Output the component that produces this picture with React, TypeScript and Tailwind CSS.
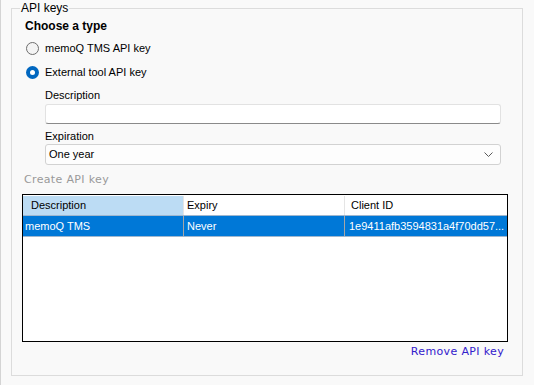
import React from 'react';

const ui = { fontFamily: '"Liberation Sans", Arial, sans-serif' };
const linkFont = { fontFamily: '"DejaVu Sans", Verdana, sans-serif' };

interface ApiKeyRow {
  description: string;
  expiry: string;
  clientId: string;
}

const rows: ApiKeyRow[] = [
  {
    description: 'memoQ TMS',
    expiry: 'Never',
    clientId: '1e9411afb3594831a4f70dd57...',
  },
];

function Radio({ checked }: { checked?: boolean }) {
  if (checked) {
    return (
      <span className="flex h-[13px] w-[13px] items-center justify-center rounded-full bg-[#0067c0]">
        <span className="h-[5px] w-[5px] rounded-full bg-white" />
      </span>
    );
  }
  return (
    <span className="h-[13px] w-[13px] rounded-full border border-[#6e6e6e] bg-[#f4f4f4]" />
  );
}

export default function App() {
  return (
    <div
      className="h-[385px] w-[534px] overflow-hidden border-l border-[#d4d4d4] bg-[#f9f9f9] text-[11px] text-black"
      style={ui}
    >
      <div className="relative ml-[10px] mt-[8px] h-[368px] w-[512px] border border-[#dcdcdc]">
        <span className="absolute left-[8px] top-[-8px] bg-[#f9f9f9] px-px text-[12px] leading-[14px]">
          API keys
        </span>

        <div className="h-[15px] mt-[10px] pl-[13px] text-[12px] font-bold leading-[15px]">
          Choose a type
        </div>

        <div className="mt-[2px] flex h-[24px] items-center gap-[6px] pl-[14px]">
          <Radio />
          <span>memoQ TMS API key</span>
        </div>
        <div className="flex h-[24px] items-center gap-[6px] pl-[14px]">
          <Radio checked />
          <span>External tool API key</span>
        </div>

        <div className="pl-[33px]">
          <div className="mt-[4px] h-[14px] leading-[14px]">Description</div>
          <div className="mt-[2px] h-[20px] w-[456px] rounded-[3px] border border-[#e2e2e2] border-b-[#8a8a8a] bg-white" />

          <div className="mt-[5px] h-[14px] leading-[14px]">Expiration</div>
          <div className="mt-px flex h-[21px] w-[456px] items-center justify-between rounded-[3px] border border-[#d2d2d2] bg-[#fdfdfd] pl-[3px] pr-[7px]">
            <span>One year</span>
            <svg width="9" height="5" viewBox="0 0 9 5" fill="none">
              <polyline points="0.5,0.5 4.5,4.5 8.5,0.5" stroke="#5a5a5a" strokeWidth="1" />
            </svg>
          </div>
        </div>

        <div
          className="mt-[8px] h-[14px] pl-[12px] text-[11px] leading-[14px] tracking-[0.35px] text-[#9a9a9a]"
          style={linkFont}
        >
          Create API key
        </div>

        <div className="ml-[10px] mt-[7px] h-[148px] w-[486px] border border-black bg-white">
          <div className="mt-px flex h-[19px] items-center">
            <div className="flex h-full w-[161px] items-center border-r border-[#e5e5e5] bg-[#bcdcf4] pl-[8px]">
              Description
            </div>
            <div className="flex h-full w-[161px] items-center border-r border-[#e5e5e5] pl-[3px]">
              Expiry
            </div>
            <div className="flex h-full flex-1 items-center pl-[6px]">Client ID</div>
          </div>
          {rows.map((row) => (
            <div
              key={row.clientId}
              className="flex h-[22px] border-y border-[#9fb7cf] bg-[#0078d7] text-white"
            >
              <div className="flex w-[161px] items-center border-r border-[#a6a6a6] pl-[2px]">
                {row.description}
              </div>
              <div className="flex w-[161px] items-center border-r border-[#a6a6a6] pl-[3px]">
                {row.expiry}
              </div>
              <div className="flex flex-1 items-center overflow-hidden whitespace-nowrap pl-[4px]">
                {row.clientId}
              </div>
            </div>
          ))}
        </div>

        <div className="ml-[10px] mt-[3px] flex h-[14px] w-[486px] justify-end pr-[4px] leading-[14px]">
          <span className="text-[11px] tracking-[0.35px] text-[#3320cc]" style={linkFont}>
            Remove API key
          </span>
        </div>
      </div>
    </div>
  );
}
